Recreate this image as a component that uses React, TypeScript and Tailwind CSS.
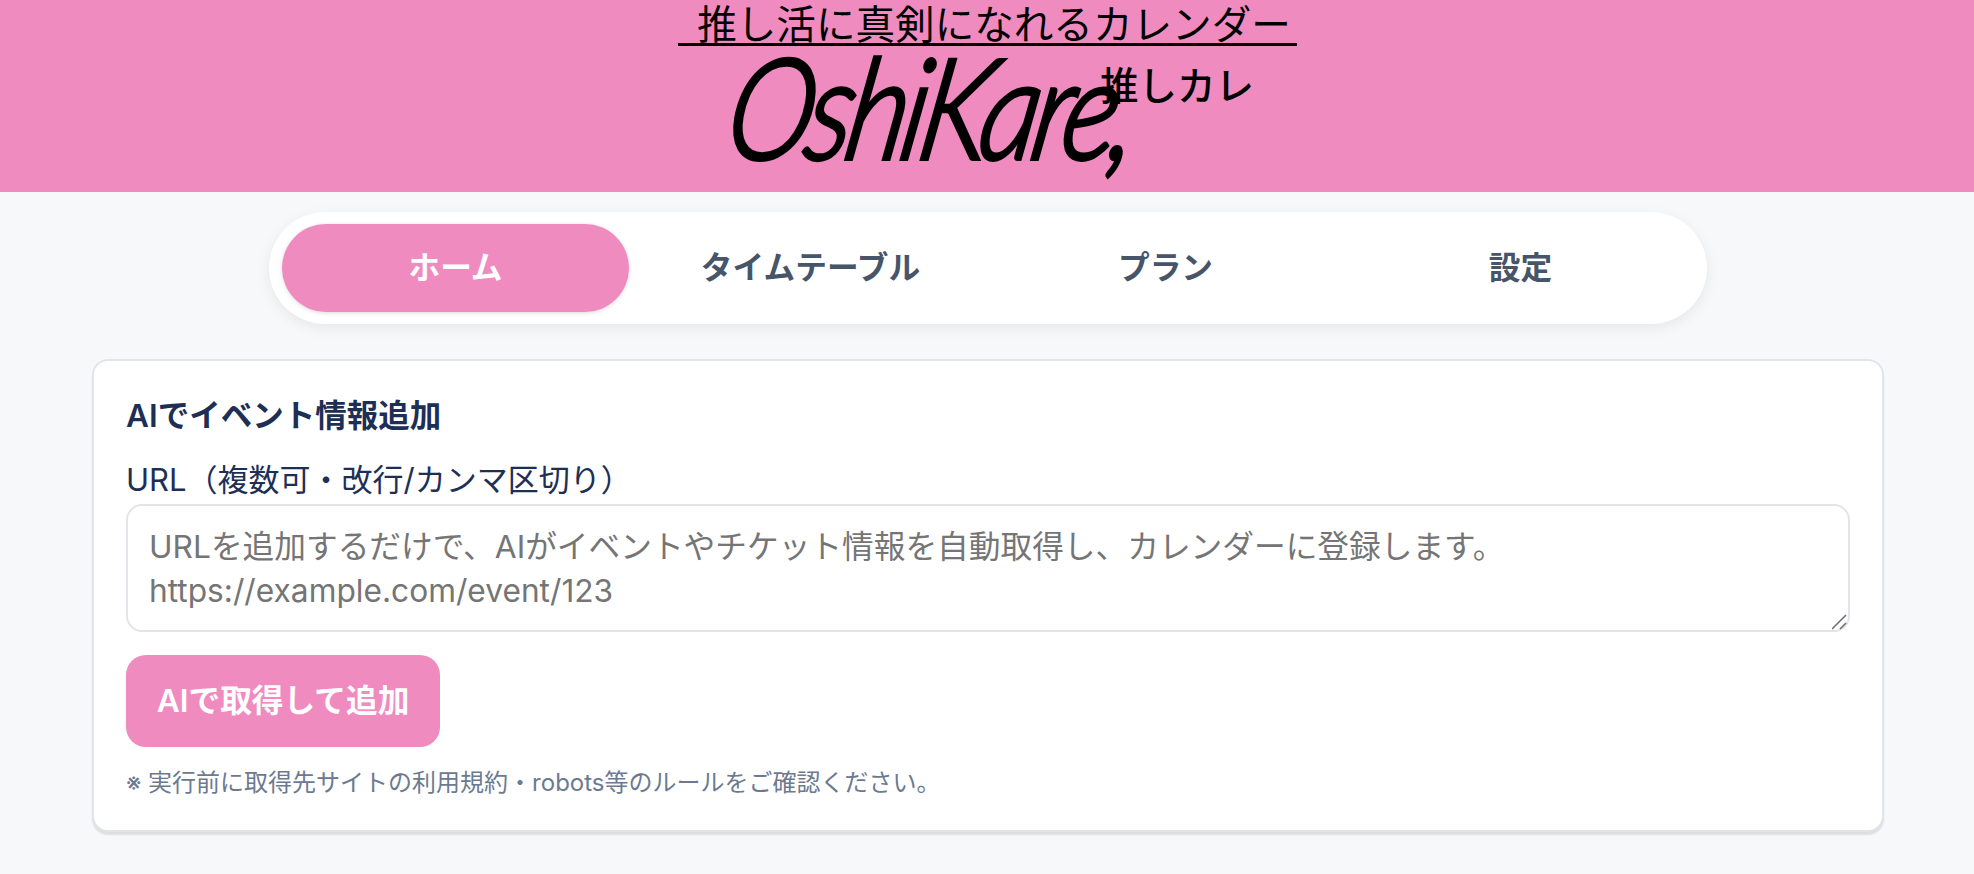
import React from "react";

const tabs = ["ホーム", "タイムテーブル", "プラン", "設定"];

const Header = () => {
  return (
    <header className="h-[192px] bg-[#f08bc0] flex flex-col items-center overflow-hidden">
      <div className="w-[619px] h-[46px] pl-[14px] border-b-[3px] border-black text-center text-[39.6px] leading-[50px] text-black">
        推し活に真剣になれるカレンダー
      </div>
      {/* wordmark: no script font here, so a slanted italic with a stroke */}
      <div className="relative w-[620px] h-[146px]">
        <span className="absolute left-[-54px] top-[-21px] w-[620px] text-center scale-x-[0.84] -skew-x-12 font-['Lato'] italic font-light tracking-[-0.05em] text-[140px] leading-[160px] text-black whitespace-nowrap [-webkit-text-stroke:4px_black]">
          OshiKare,
        </span>
        <span className="absolute left-[423px] top-[18px] text-[38.5px] leading-[44px] font-medium text-black whitespace-nowrap">
          推しカレ
        </span>
      </div>
    </header>
  );
};

const TabNav = () => {
  return (
    <nav className="ml-[269px] mt-[20px] w-[1438px] h-[112px] bg-white rounded-[56px] px-[13px] py-[12px] grid grid-cols-4 gap-[8px] shadow-[0_4px_14px_rgba(0,0,0,0.07)]">
      {tabs.map((tab, i) => (
        <button
          key={tab}
          className={
            i === 0
              ? "rounded-[44px] bg-[#f08bc0] text-white text-[31.7px] font-semibold shadow-[0_1px_4px_rgba(0,0,0,0.15)]"
              : "rounded-[44px] text-[#475569] text-[31.7px] font-semibold"
          }
        >
          {tab}
        </button>
      ))}
    </nav>
  );
};

export default function App() {
  return (
    <div className="min-h-[874px] bg-[#f7f8fa] font-['Inter','Noto_Sans_CJK_JP',sans-serif]">
      <Header />
      <TabNav />
      <main className="pl-[92px] pr-[90px] pt-[35px]">
        <section className="h-[473px] bg-white border-2 border-[#e2e4ea] rounded-[16px] pt-[35px] px-[32px] shadow-[0_3px_2px_rgba(0,0,0,0.1)]">
          <h2 className="text-[31.5px] leading-[40px] font-semibold text-[#1e2f55]">AIでイベント情報追加</h2>
          <label className="block mt-[24px] text-[31px] leading-[40px] text-[#1e2f55]">
            URL（複数可・改行/カンマ区切り）
          </label>
          <div className="relative mt-[4px]">
            <textarea
              className="block w-full h-[128px] border-2 border-[#e2e4ea] rounded-[16px] px-[21px] py-[19px] text-[31.7px] leading-[44px] resize-none outline-none placeholder:text-[#757575]"
              placeholder={"URLを追加するだけで、AIがイベントやチケット情報を自動取得し、カレンダーに登録します。\nhttps://example.com/event/123"}
            />
            {/* resize grip */}
            <svg className="absolute right-[2px] bottom-[2px] w-[16px] h-[16px]" viewBox="0 0 16 16" fill="none" stroke="#6b6b6b" strokeWidth="1.5">
              <path d="M0 15 14 1M8 15l6-6" />
            </svg>
          </div>
          <button className="block mt-[23px] w-[314px] h-[92px] rounded-[20px] bg-[#f08bc0] text-white text-[31.7px] font-semibold">
            AIで取得して追加
          </button>
          <p className="mt-[20px] text-[24px] leading-[32px] text-[#6b7a90]">
            ※ 実行前に取得先サイトの利用規約・robots等のルールをご確認ください。
          </p>
        </section>
      </main>
    </div>
  );
}
